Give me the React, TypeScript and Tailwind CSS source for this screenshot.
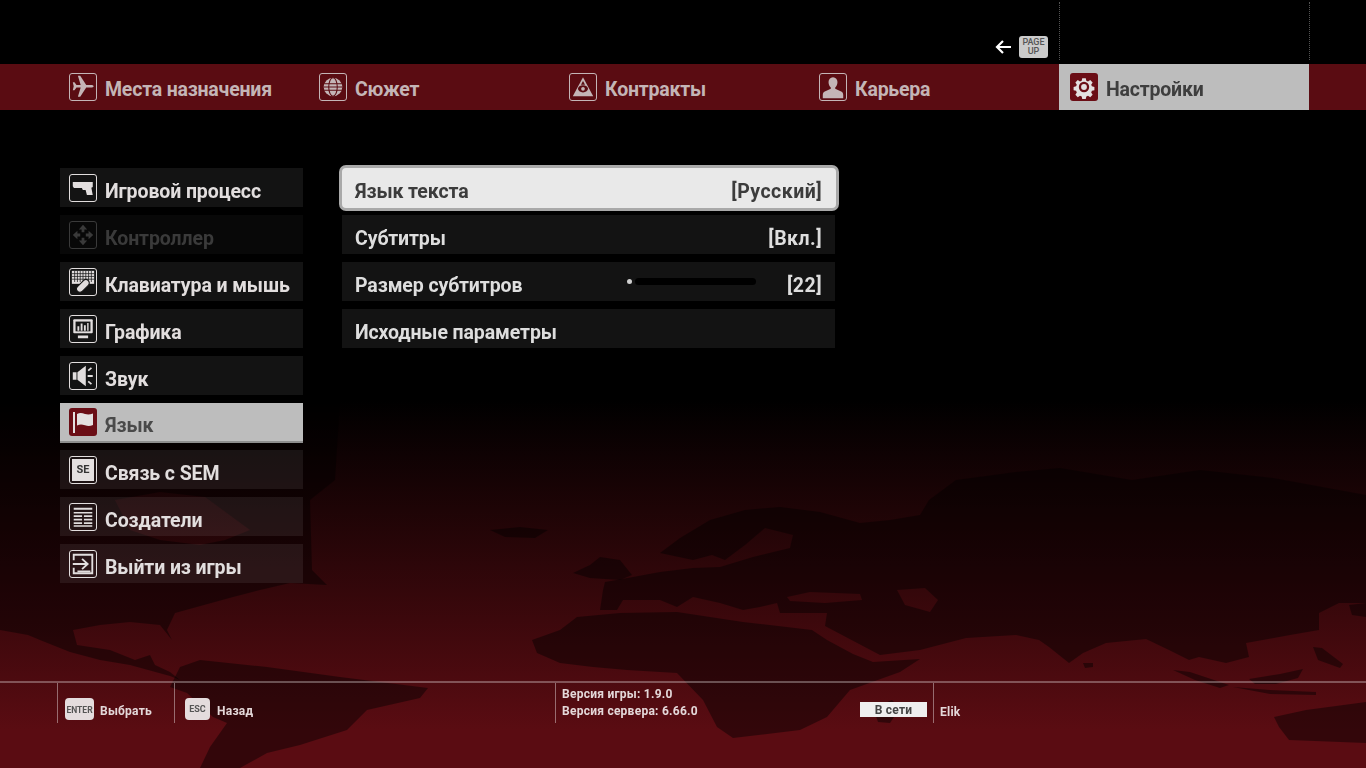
import React from "react";

const FONT = { fontFamily: "Roboto, 'Noto Sans', sans-serif" };

type IconProps = { bg: string };

const Plane = () => (
  <path fill="currentColor" d="M25.5 13.2c0 .9-1.5 1.4-3 1.4h-5L11 24.5H8.5l3-9.9H7l-2.2 2.9H3l1-4.3L3 9h1.8L7 11.8h4.5L8.5 2H11l6.5 9.8h5c1.5 0 3 .5 3 1.4z" />
);
const Globe = ({ bg }: IconProps) => (
  <g>
    <circle cx="14" cy="14" r="10" fill="currentColor" />
    <g stroke={bg} strokeWidth="1.1" fill="none">
      <path d="M4 10.5h20M4 14h20M4 17.5h20" />
      <ellipse cx="14" cy="14" rx="4.6" ry="10" />
    </g>
  </g>
);
const Triangle = ({ bg }: IconProps) => (
  <g>
    <path fill="currentColor" d="M14 3.5L25 24H3z" />
    <ellipse cx="14" cy="16" rx="5.4" ry="3.8" fill={bg} />
    <circle cx="14" cy="16" r="2" fill="currentColor" />
    <path d="M14 7.5l2.2 4h-4.4z" fill={bg} />
  </g>
);
const Person = () => (
  <path fill="currentColor" d="M14 3.5c3 0 4.8 2.3 4.8 5.2 0 2.6-1 4.6-2.4 5.8v1.4l6.4 3c1.4.7 2.2 1.8 2.2 3.6V26H3v-3.5c0-1.8.8-2.9 2.2-3.6l6.4-3v-1.4c-1.4-1.2-2.4-3.2-2.4-5.8 0-2.9 1.8-5.2 4.8-5.2z" />
);
const Gear = ({ bg }: IconProps) => (
  <g>
    <path fill="currentColor" d="M11.8 3h4.4l.7 3.2 2.1.9 2.8-1.8 3 3-1.8 2.8.9 2.1 3.1.7v4.2l-3.1.7-.9 2.1 1.8 2.8-3 3-2.8-1.8-2.1.9-.7 3.2h-4.4l-.7-3.2-2.1-.9-2.8 1.8-3-3 1.8-2.8-.9-2.1-3.1-.7v-4.2l3.1-.7.9-2.1-1.8-2.8 3-3 2.8 1.8 2.1-.9z" transform="translate(2.8 2.8) scale(.8)" />
    <circle cx="14" cy="14" r="5.2" fill={bg} />
    <circle cx="14" cy="14" r="2.9" fill="currentColor" />
  </g>
);
const Gun = () => (
  <path fill="currentColor" d="M3 7.5h21.5v5.5l-1.5.7 1.5 7.8h-6.3l-1.4-5.3h-3l-1-2.2H4.2L3 12.2z" />
);
const Pad = () => (
  <path fill="currentColor" d="M14 3l4.5 5h-3v3h-3V8h-3zM14 25l-4.5-5h3v-3h3v3h3zM3 14l5-4.5v3h3v3H8v3zM25 14l-5 4.5v-3h-3v-3h3v-3z" />
);
const Keyboard = ({ bg }: IconProps) => (
  <g>
    <path fill="currentColor" d="M2 2h24v14H2z" />
    <path stroke={bg} strokeWidth=".8" d="M2 5h24M2 8h24M2 11h24M5 2v12M8 2v12M11 2v12M14 2v12M17 2v12M20 2v12M23 2v12" />
    <path fill="currentColor" stroke={bg} strokeWidth="1.2" d="M8 19l6.5-6.5c1.5-1.5 3.8-1.4 5.2 0s1.5 3.7 0 5.2L13.2 24c-1.4 1.4-3.7 1.4-5.1 0s-1.5-3.6-.1-5z" />
  </g>
);
const Monitor = ({ bg }: IconProps) => (
  <g>
    <rect x="3.5" y="3.5" width="21" height="15" rx="1" fill="currentColor" />
    <rect x="6" y="6" width="16" height="10.5" fill={bg} />
    <path fill="currentColor" d="M8 11h2v5H8zM11.5 8h2v8h-2zM15 10h2v6h-2zM18.5 7.5H20V16h-1.5zM8.5 21h11v3h-11z" />
  </g>
);
const Speaker = () => (
  <g fill="currentColor">
    <path d="M3 10h4v8H3zM8 10l9-7v22l-9-7z" />
    <path d="M19 7.5l3.5-3 1.2 1.3-3.5 3zM19 13h5.5v2H19zM19 20.5l3.5 3 1.2-1.3-3.5-3z" />
  </g>
);
const Flag = () => (
  <g fill="currentColor">
    <path d="M4 4h2v21H4z" />
    <path d="M8 6c3-1.5 5-1 8 0 3 .8 5 .5 8-.5V17c-3 1.2-5 1.2-8 .3-3-1-5-1.2-8 .2z" />
  </g>
);
const Lines = () => (
  <path fill="currentColor" d="M4 4h20v2.2H4zM4 8.5h20v1.8H4zM4 12.2h9v1.8H4zM15 12.2h9v1.8h-9zM4 16h9v1.8H4zM15 16h9v1.8h-9zM4 19.7h9v1.8H4zM15 19.7h9v1.8h-9zM4 23h20v1.6H4z" />
);
const Exit = () => (
  <g fill="none" stroke="currentColor" strokeWidth="2">
    <path d="M4 10V4h20v20H4v-6" />
    <path d="M3 14h15M13 8.5l6 5.5-6 5.5" />
    <path d="M8 22h14" />
  </g>
);

function IconBox({ children, active, dim }: { children: React.ReactNode; active?: boolean; dim?: boolean }) {
  return (
    <span
      className={
        active
          ? "flex h-7 w-7 shrink-0 items-center justify-center rounded-[3px] bg-[#6b0e16] text-[#e4e0e0]"
          : dim
            ? "flex h-7 w-7 shrink-0 items-center justify-center rounded-[3px] border border-[#3a3a3a] text-[#3a3a3a]"
            : "flex h-7 w-7 shrink-0 items-center justify-center rounded-[3px] border-[1.5px] border-current"
      }
    >
      {children}
    </span>
  );
}

const ico = (node: React.ReactNode) => (
  <svg viewBox="0 0 28 28" className="h-full w-full">
    {node}
  </svg>
);

const RED = "#5a0c12";
const tabs: { label: string; icon: React.ReactNode; active?: boolean }[] = [
  { label: "Места назначения", icon: <Plane /> },
  { label: "Сюжет", icon: <Globe bg={RED} /> },
  { label: "Контракты", icon: <Triangle bg={RED} /> },
  { label: "Карьера", icon: <Person /> },
  { label: "Настройки", icon: <Gear bg="#6b0e16" />, active: true },
];

const ROW = "#171717";
const menu: { label: string; icon: React.ReactNode; active?: boolean; dim?: boolean }[] = [
  { label: "Игровой процесс", icon: <Gun /> },
  { label: "Контроллер", icon: <Pad />, dim: true },
  { label: "Клавиатура и мышь", icon: <Keyboard bg={ROW} /> },
  { label: "Графика", icon: <Monitor bg={ROW} /> },
  { label: "Звук", icon: <Speaker /> },
  { label: "Язык", icon: <Flag />, active: true },
  { label: "Связь с SEM", icon: null },
  { label: "Создатели", icon: <Lines /> },
  { label: "Выйти из игры", icon: <Exit /> },
];

function WorldMap() {
  return (
    <svg viewBox="0 0 1366 768" className="pointer-events-none absolute inset-0 h-full w-full blur-[0.7px]" fill="#000" fillOpacity="0.43">
      {/* North America with Hudson Bay */}
      <path
        fillRule="evenodd"
        d="M0 400L340 400L335 480L310 500L312 570L327 585L290 583L260 590L233 597L175 613L167 630L172 640L160 625L130 622L100 625L73 630L77 645L110 650L135 660L150 655L155 665L170 672L180 680L170 676L130 665L100 660L70 652L40 640L28 635L0 630ZM115 500L160 492L205 497L250 530L225 540L200 545L160 540L130 530Z"
      />
      {/* South America */}
      <path d="M170 687L180 667L200 660L267 667L340 677L428 688L420 698L367 710L347 730L300 745L267 753L240 768L200 768L210 747L227 723L213 717L187 693Z" />
      {/* Africa */}
      <path d="M532 640L560 630L577 617L620 613L677 612L743 622L812 630L827 640L853 654L873 662L920 659L900 672L850 690L827 717L800 730L733 738L717 727L703 700L677 673L627 670L593 667L560 663L537 653Z" />
      {/* Eurasia */}
      <path
        fillRule="evenodd"
        d="M603 590L605 582L633 577L660 572L693 568L720 567L753 557L790 548L793 535L765 528L745 545L725 560L712 555L693 560L660 553L680 538L710 520L745 510L780 507L820 512L860 523L890 520L920 515L929 500L956 480L1016 472L1060 468L1132 480L1200 470L1273 478L1366 495L1366 603L1339 603L1319 613L1319 630L1290 635L1246 643L1249 657L1226 663L1199 657L1189 660L1169 650L1146 639L1106 643L1083 653L1069 663L1049 647L1039 640L1016 635L966 638L920 650L880 655L825 626L827 613L780 613L777 603L760 607L743 610L720 603L693 597L677 607L660 600L623 600L617 610L600 610ZM787 597L810 592L860 594L862 600L825 603L790 601ZM897 590L925 588L938 600L930 612L905 605Z"
      />
      {/* Islands */}
      <path d="M490 530L520 527L548 530L535 538L505 537Z" />
      <path d="M573 573L590 565L600 557L620 560L632 575L620 580L590 578Z" />
      <path d="M1173 670L1190 672L1229 685L1220 688L1195 680Z" />
      <path d="M1249 679L1280 674L1303 669L1298 678L1276 684L1255 684Z" />
      <path d="M1233 687L1270 690L1316 692L1316 695L1270 694Z" />
      <path d="M1313 647L1322 648L1343 664L1340 668L1318 660Z" />
      <path d="M1083 663L1093 663L1093 667L1085 668Z" />
      <path d="M1349 605L1366 603L1366 617L1352 615Z" />
      <path d="M1274 717L1306 710L1366 702L1366 743L1289 740L1279 727Z" />
      <path d="M873 708L892 700L900 708L890 723L878 722Z" />
    </svg>
  );
}

function Row({ label, value, selected, children }: { label: string; value?: string; selected?: boolean; children?: React.ReactNode }) {
  return (
    <div
      className={
        selected
          ? "-mx-[3.5px] -mt-[3px] -mb-[4px] box-content flex h-10 items-center rounded-[7px] border-[3px] border-[#a9a9a9] bg-[#e9e9e9] px-[13.5px] text-[#3c3c3c]"
          : "flex h-[39px] items-center bg-white/[0.075] px-[13px] text-[#dedede]"
      }
    >
      <span className="pt-[8px] tracking-[-0.1px]">{label}</span>
      <div className="ml-auto flex items-center">
        {children}
        {value ? <span className="pt-[8px] tracking-[0.45px]">{value}</span> : null}
      </div>
    </div>
  );
}

export default function App() {
  return (
    <div
      className="relative flex h-[768px] w-[1366px] flex-col overflow-hidden bg-[linear-gradient(to_bottom,#000_0px,#000_400px,#5a0c12_730px)]"
      style={FONT}
    >
      <WorldMap />

      <div className="relative flex h-[768px] flex-col blur-[0.3px]">
        {/* top strip */}
        <div className="flex h-16 justify-end pr-[56px] text-white">
          <div className="mr-[11px] flex items-start gap-2 pt-9">
            <svg viewBox="0 0 16 14" className="mt-1 h-[14px] w-4" fill="none" stroke="#fff" strokeWidth="2.2">
              <path d="M16 7H2M8 1L2 7l6 6" />
            </svg>
            <div className="flex h-[22px] w-[29px] flex-col items-center justify-center rounded-[3px] bg-[#cbcbcb] text-[9px] leading-[9px] font-medium text-[#555]">
              <span>PAGE</span>
              <span>UP</span>
            </div>
          </div>
          <div className="mt-[2px] h-[58px] w-[251px] border-x border-dotted border-[#555]" />
        </div>

        {/* tab bar */}
        <div className="flex h-[46px] bg-[#5a0c12] pl-[59px] text-[19.5px] font-bold tracking-[-0.2px]">
          {tabs.map((t) => (
            <div
              key={t.label}
              className={
                t.active
                  ? "flex w-[250px] items-center gap-2 bg-[#bdbdbd] pl-[11px] text-[#3e3e3e]"
                  : "flex w-[250px] items-center gap-2 pl-[10px] text-[#c4b5b6]"
              }
            >
              <IconBox active={t.active}>{ico(t.icon)}</IconBox>
              <span className="pt-[5px]">{t.label}</span>
            </div>
          ))}
        </div>

        {/* main */}
        <div className="flex flex-1 gap-[39px] pt-[58px] pl-[60px] text-[19.5px] font-bold">
          <div className="flex w-[243px] flex-col gap-[8px] tracking-[-0.1px]">
            {menu.map((m) => (
              <div
                key={m.label}
                className={
                  m.active
                    ? "-mb-[1px] flex h-10 items-center gap-2 border-b-2 border-[#8e8e8e] bg-[#bdbdbd] pl-[9px] text-[#4a4a4a]"
                    : m.dim
                      ? "flex h-[39px] items-center gap-2 bg-white/[0.03] pl-[9px] text-[#3a3a3a]"
                      : "flex h-[39px] items-center gap-2 bg-white/[0.075] pl-[9px] text-[#e2dede]"
                }
              >
                {m.icon === null ? (
                  <span className="flex h-7 w-7 shrink-0 items-center justify-center rounded-[3px] border-[1.5px] border-current p-[2px]">
                    <span className="flex h-full w-full items-center justify-center bg-[#e4e0e0] text-[11px] leading-none font-bold text-[#333]">
                      SE
                    </span>
                  </span>
                ) : (
                  <IconBox active={m.active} dim={m.dim}>
                    {ico(m.icon)}
                  </IconBox>
                )}
                <span className={m.active ? "pt-[7px]" : "pt-[9px]"}>{m.label}</span>
              </div>
            ))}
          </div>

          <div className="flex w-[493px] flex-col gap-[8px]">
            <Row label="Язык текста" value="[Русский]" selected />
            <Row label="Субтитры" value="[Вкл.]" />
            <Row label="Размер субтитров" value="[22]">
              <div className="mr-[31px] flex items-center">
                <span className="h-[5px] w-[5px] rounded-full bg-[#cfcfcf]" />
                <span className="ml-[3px] h-[7px] w-[121px] rounded-full bg-black" />
              </div>
            </Row>
            <Row label="Исходные параметры" />
          </div>
        </div>

        {/* footer */}
        <div className="flex h-[87px] border-t-2 border-white/30 pl-[57px] text-[12px] font-bold tracking-[0.25px] text-[#e4d8d9]">
          <div className="flex h-10 w-[117px] items-start gap-[6px] border-l border-white/40 pt-[15px] pl-[7px]">
            <span className="flex h-[22px] w-[29px] items-center justify-center rounded-[4px] bg-[#e4dcdd] pt-[2px] text-[8.5px] font-bold tracking-normal text-[#555]">
              ENTER
            </span>
            <span className="pt-[4px]">Выбрать</span>
          </div>
          <div className="flex h-10 w-[381px] items-start gap-[7px] border-l border-white/40 pt-[15px] pl-[10px]">
            <span className="flex h-[22px] w-[25px] items-center justify-center rounded-[4px] bg-[#e4dcdd] pt-[2px] text-[9px] font-bold tracking-normal text-[#555]">
              ESC
            </span>
            <span className="pt-[4px]">Назад</span>
          </div>
          <div className="flex h-10 w-[378px] items-start justify-between border-l border-white/40 pr-[6px] pl-[6px]">
            <div className="pt-[3px] leading-[17px]">
              <div>Версия игры: 1.9.0</div>
              <div>Версия сервера: 6.66.0</div>
            </div>
            <span className="mt-[19px] flex h-[15px] w-[67px] items-center justify-center bg-[#efefef] pt-[1px] font-bold text-[#444]">
              В сети
            </span>
          </div>
          <div className="flex h-10 items-start border-l border-white/40 pt-[20px] pl-[6px]">Elik</div>
        </div>
      </div>
    </div>
  );
}
